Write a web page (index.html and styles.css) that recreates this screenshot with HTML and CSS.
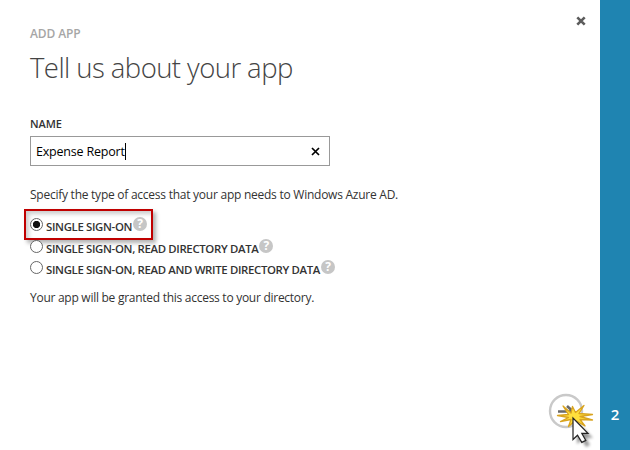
FILE: index.html
```html
<!DOCTYPE html>
<html lang="en">
<head>
<meta charset="utf-8">
<title>Add app</title>
<link rel="stylesheet" href="styles.css">
</head>
<body>
<div class="wizard">
  <main class="page">
    <div class="eyebrow">ADD APP</div>
    <h1 class="title">Tell us about your app</h1>
    <label class="label">NAME</label>
    <div class="field">
      <span class="value">Expense Report</span><span class="caret"></span>
      <svg class="clear" width="9" height="9" viewBox="0 0 9 9"><path d="M1 1l7 7M8 1L1 8" stroke="#000" stroke-width="1.7"/></svg>
    </div>
    <p class="text specify">Specify the type of access that your app needs to Windows Azure AD.</p>
    <div class="options">
      <div class="option"><span class="radio checked"></span><span class="name">SINGLE SIGN-ON</span><span class="help">?</span><span class="highlight"></span></div>
      <div class="option"><span class="radio"></span><span class="name">SINGLE SIGN-ON, READ DIRECTORY DATA</span><span class="help">?</span></div>
      <div class="option"><span class="radio"></span><span class="name">SINGLE SIGN-ON, READ AND WRITE DIRECTORY DATA</span><span class="help">?</span></div>
    </div>
    <p class="text granted">Your app will be granted this access to your directory.</p>
    <svg class="close" width="10" height="10" viewBox="0 0 10 10"><path d="M1.3 1.3l7.4 7.4M8.7 1.3L1.3 8.7" stroke="#5c5c5c" stroke-width="2.6"/></svg>
    <svg class="next" width="60" height="65" viewBox="540 385 60 65">
      <defs><filter id="soft" x="-50%" y="-50%" width="200%" height="200%"><feGaussianBlur stdDeviation="1.8"/></filter></defs>
      <circle cx="566" cy="411" r="16" fill="#fff" stroke="#c9c9c9" stroke-width="2.4"/>
      <path d="M558 411.500h14M567 406l6 5.500-6 5.500" fill="none" stroke="#686868" stroke-width="2.600"/>
      <path d="M577 422v22l5-4 4 7 4-2-4-7h7z" fill="#000" opacity=".4" filter="url(#soft)"/>
      <path d="M563 406L571 413L572.500 406.500L575.500 412.500L584 405.500L579 413.500L592.500 414.500L580 416.500L592.500 420L580 419.500L585 426L575.500 420.500L568.500 426.500L571 419.500L560.500 421.500L568.500 417.500L557.500 415.500L568.500 414.500z" fill="#ffdf3c" stroke="#d9a420" stroke-width="1.300" stroke-linejoin="round"/>
      <path d="M573 418v21.500l4.500-4.300 4.300 7.200 4-2-4-7h6.200z" fill="#fff" stroke="#222" stroke-width="1.200"/>
    </svg>
  </main>
  <aside class="step">2</aside>
</div>
</body>
</html>
```
FILE: styles.css
```css
* { box-sizing: border-box; }
body { margin: 0; background: #fff; font-family: "Open Sans", "Noto Sans", sans-serif; color: #333; }
.wizard { display: flex; width: 630px; height: 450px; overflow: hidden; }
.page { position: relative; flex: 1; padding: 26px 0 0 30px; white-space: nowrap; }
.eyebrow { height: 16px; line-height: 16px; font-size: 12px; font-weight: 600; color: #a6a6a6; letter-spacing: -.1px; }
.title { margin: 6px 0 0; height: 40px; line-height: 40px; font-size: 27.5px; font-weight: 300; color: #444; letter-spacing: -.56px; }
.label { display: block; margin-top: 28px; height: 16px; line-height: 16px; font-size: 11px; font-weight: 600; letter-spacing: -.1px; }
.field { display: flex; align-items: center; margin-top: 4px; width: 300px; height: 30px; padding: 0 9px 0 5px; border: 1px solid #999; color: #000; }
.value { font-size: 12.5px; letter-spacing: -.2px; }
.caret { width: 1px; height: 17px; background: #000; }
.clear { margin-left: auto; }
.text { margin: 0; height: 18px; line-height: 18px; font-size: 12px; }
.specify { margin-top: 20px; letter-spacing: -.25px; }
.options { margin-top: 10px; }
.option { position: relative; display: flex; align-items: center; height: 21.5px; }
.radio { width: 13px; height: 13px; border: 1px solid #666; border-radius: 50%; background: #fff; }
.checked { background: radial-gradient(circle, #111 0 3.3px, #fff 4px); }
.name { margin: 4px 0 0 3px; font-size: 11.4px; font-weight: 600; line-height: 17px; letter-spacing: -.34px; }
.help { width: 14px; height: 14px; margin: -1px 0 0 1px; border-radius: 50%; background: #c6c6c6; color: #fff; font-size: 12px; font-weight: 700; line-height: 14px; text-align: center; }
.highlight { position: absolute; left: -6px; top: -5px; width: 129px; height: 31px; border: 2px solid #c00000; box-shadow: 3px 3px 4px rgba(0,0,0,.3), inset 3px 3px 4px rgba(0,0,0,.2); }
.granted { margin-top: 10px; letter-spacing: -.27px; }
.close { position: absolute; left: 576px; top: 16px; }
.next { position: absolute; left: 540px; top: 385px; }
.step { width: 30px; padding-top: 404px; background: #1f84b1; color: #fff; font-size: 15px; font-weight: 600; line-height: 20px; text-align: center; }
```
